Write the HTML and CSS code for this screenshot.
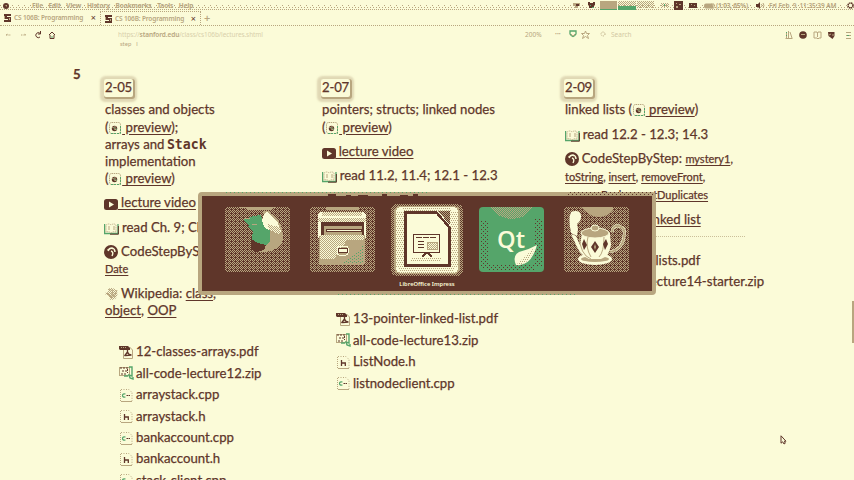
FILE: index.html
```html
<!DOCTYPE html>
<html lang="en">
<head>
<meta charset="utf-8">
<title>CS 106B: Programming Abstractions</title>
<link rel="stylesheet" href="styles.css">
</head>
<body>
<svg class="defs" width="0" height="0" aria-hidden="true">
  <defs>
    <pattern id="half" width="2" height="2" patternUnits="userSpaceOnUse"><rect width="1" height="1" fill="#b8a67f"/><rect x="1" y="1" width="1" height="1" fill="#b8a67f"/></pattern>
    <pattern id="weave" width="4" height="4" patternUnits="userSpaceOnUse"><path fill="#b8a67f" d="M0 0h1v1H0zM2 0h1v1H2zM1 1h1v1H1zM3 1h1v1H3zM0 2h1v1H0zM1 3h1v1H1zM3 3h1v1H3z"/></pattern>
    <pattern id="speck" width="4" height="4" patternUnits="userSpaceOnUse"><path fill="#5f362a" d="M0 0h1v1H0zM2 2h1v1H2z"/></pattern>
    <pattern id="tanspeck" width="4" height="4" patternUnits="userSpaceOnUse"><path fill="#b8a67f" d="M0 0h1v1H0zM2 0h1v1H2zM1 2h1v1H1zM3 2h1v1H3z"/></pattern>
    <pattern id="creamspeck" width="2" height="2" patternUnits="userSpaceOnUse"><path fill="#fbfbd8" d="M0 0h1v1H0zM1 1h1v1H1z"/></pattern>
    <pattern id="greenspeck" width="4" height="3" patternUnits="userSpaceOnUse"><path fill="#55a56a" d="M0 0h1v1H0zM2 1h1v1H2z"/></pattern>
    <symbol id="s-icon" viewBox="0 0 7 8"><path fill="#5f362a" d="M0 0h7v2H3v1h4v5H0V6h4V5H0z"/><path fill="#b8a67f" d="M0 2h1v3H0zM5 4h1v2H5z"/></symbol>
    <symbol id="preview" viewBox="0 0 14 14"><rect x="1.500" y="1.500" width="11" height="11" rx="2" fill="none" stroke="#b8a67f" stroke-dasharray="1.500 .7"/><path d="M3 12.500h9.500V4" fill="none" stroke="#55a56a" stroke-dasharray="2 1"/><circle cx="6.500" cy="7.500" r="2.700" fill="#5f362a"/><path d="M4 6l2 1M7 5v3M6 8l3 1" stroke="#b8a67f"/><path d="M6 7h1M8 8h1" stroke="#55a56a"/></symbol>
    <symbol id="video" viewBox="0 0 14 11"><rect width="14" height="11" rx="2.500" fill="#5f362a"/><path d="M5 2.500v6l5-3z" fill="#fbfbd8"/></symbol>
    <symbol id="book" viewBox="0 0 15 12"><path d="M.6 1v9.500h13.400V1" fill="none" stroke="#55a56a" stroke-width="1.300"/><path d="M2 9V2q3-2 5 0 3-2 5 0v7q-3-1-5 1-2-2-5-1z" fill="#fbfbd8" stroke="#b8a67f" stroke-width=".8" stroke-dasharray="1.500 .7"/><path d="M4 4h2M4 6h2M9 4h2M9 6h2" stroke="#b8a67f"/><path d="M6 11.200h8.400V3" fill="none" stroke="#5f362a"/></symbol>
    <symbol id="step" viewBox="0 0 14 14"><circle cx="7" cy="7" r="7" fill="#5f362a"/><path d="M4 6q1-3 4-3 3 1 3 4M7 6q3 1 1 5" fill="none" stroke="#fbfbd8" stroke-width="1.400"/><path d="M3 4h1v1H3zM9 4h1v1H9z" fill="#b8a67f"/></symbol>
    <symbol id="wiki" viewBox="0 0 14 14"><circle cx="7.500" cy="7" r="6" fill="url(#half)"/><path d="M3 6l5 5V5l2 5 3-7M5 2l4 2" fill="none" stroke="#b8a67f"/><path d="M0 3h5l-2 3zM0 8h4l2 4H2z" fill="#fbfbd8"/></symbol>
    <symbol id="pdf" viewBox="0 0 15 14"><path d="M4.500 4v9.500h9V5l-3-3" fill="none" stroke="#b8a67f"/><path d="M0 1h9l2 2v2H1L0 4z" fill="#5f362a"/><path d="M2 2.500h6" stroke="#b8a67f" stroke-dasharray="1 1"/><path d="M8.500 5v2l-3 4M8.500 7q1 3 4 3l-6 .5" stroke="#5f362a" fill="none" stroke-width="1.300"/></symbol>
    <symbol id="zip" viewBox="0 0 15 14"><rect x=".5" y="1.500" width="10" height="8" fill="none" stroke="#b8a67f"/><path d="M1 2h9M2 8h5M3 5h5M8.500 3v4" stroke="#5f362a" stroke-dasharray="2 1"/><path d="M10 1h3v9l-3-1 1 3 3 1v-2M5 10h4" fill="none" stroke="#55a56a" stroke-width="1.400"/></symbol>
    <symbol id="sheet" viewBox="0 0 13 14"><path d="M1 1.500h8l3 3V13" fill="none" stroke="#b8a67f" stroke-dasharray="1 1.500"/><path d="M.5 2v11" stroke="#b8a67f" stroke-dasharray="1 1"/><path d="M1 13.500h11" stroke="#b8a67f"/></symbol>
    <symbol id="cpp" viewBox="0 0 13 14"><use href="#sheet"/><path d="M5.500 6q-3-.5-3 1.500t3 1.500" fill="none" stroke="#55a56a" stroke-width="1.200"/><path d="M6.500 7.500H10" stroke="#5f362a" stroke-dasharray="1.500 .5"/></symbol>
    <symbol id="h" viewBox="0 0 13 14"><use href="#sheet"/><path d="M4.500 5v6M5 8h3.300v3" fill="none" stroke="#5f362a" stroke-width="1.300"/></symbol>
  </defs>
</svg>

<header class="menubar">
  <svg class="orb" width="6" height="6"><circle cx="3" cy="3" r="3" fill="#5f362a"/><path d="M2 2h2v2" fill="#b8a67f"/></svg>
  <nav class="menus"><span>File</span><span>Edit</span><span>View</span><span>History</span><span>Bookmarks</span><span>Tools</span><span>Help</span></nav>
  <div class="status">
    <svg width="125" height="11" shape-rendering="crispEdges">
      <path fill="#b8a67f" d="M1 3h7v3H6v2H3V6H1z"/><path fill="#5f362a" d="M4 4h3v2H4zM16 2h2v1h3V2h2v3h-1v3h-5V5h-1z"/><path fill="#55a56a" d="M18 5h1v1h-1zM20 7h2v1h-2z"/>
      <path fill="#b8a67f" d="M28 1h17v8H28z"/><path fill="url(#half)" d="M46 1h18v6H46zM65 1h17v7H65z"/><path fill="#55a56a" d="M46 6h18v4H46zM28 9h17v1H28z"/>
      <path fill="url(#half)" d="M89 3h8v4h-8z"/><path fill="#55a56a" d="M92 4h1v2h-1z"/>
      <path fill="#5f362a" d="M102 1h9v9h-9zM117 3h8v5h-8z"/><path fill="#b8a67f" d="M104 3h1v1h-1zM107 4h2v1h-2zM104 6h2v2h-2zM119 4h1v1h-1zM122 5h1v1h-1z"/>
    </svg>
    <svg class="battery" width="12" height="8"><rect x="1" y="1.500" width="9" height="5" rx="2" fill="#b8a67f"/><path d="M8 2h3v4H8" fill="none" stroke="#b8a67f"/></svg>
    <span class="charge">(1:03, 65%)</span>
    <svg class="speaker" width="9" height="7"><path fill="#5f362a" d="M0 2h2l2-2v7L2 5H0z"/><path d="M5 2l1 1.500L5 5M7 1l1 2.500L7 6" fill="none" stroke="#b8a67f"/></svg>
    <span class="clock">Fri Feb&nbsp; 9 &nbsp;11:35:39 AM</span>
    <svg class="power" width="7" height="7"><circle cx="3.500" cy="3.500" r="2.500" fill="none" stroke="#5f362a" stroke-width="1.500" stroke-dasharray="1.500 .5"/></svg>
  </div>
</header>

<div class="tabs">
  <div class="tab"><svg width="7" height="8"><use href="#s-icon"/></svg><span>CS 106B: Programming</span><b>×</b></div>
  <div class="tab active"><svg width="7" height="8"><use href="#s-icon"/></svg><span>CS 106B: Programming</span><b>×</b></div>
  <div class="plus">+</div>
</div>

<div class="toolbar">
  <svg class="navicons" width="56" height="10" fill="none"><path d="M0 5h5M0 5l2-1M15 5h5M20 5l-2-1" stroke="#b8a67f" stroke-dasharray="1 .6"/><path d="M34 3.300A2.500 2.500 0 1 0 34 7M34.500 1v3H32" stroke="#5f362a"/><path d="M43 5l3-3 3 3M44 5v3.500h4V5" stroke="#5f362a"/><path d="M46 6v2" stroke="#55a56a"/></svg>
  <div class="address"><i>https://</i>stanford.edu<i>/class/cs106b/lectures.shtml</i></div>
  <span class="zoomlevel">200%</span><span class="dots">•••</span>
  <svg class="urlicons" width="60" height="9" fill="none"><path d="M1 1h6v3q-3 5-6 0z" stroke="#55a56a" stroke-width="1.300"/><path d="M2 4l2 2 2-2" stroke="#b8a67f"/><path d="M16.500 1l1 2.500h3l-2 2 1 3-3-2-3 2 1-3-2-2h3z" stroke="#b8a67f"/><circle cx="34" cy="4" r="2" stroke="#b8a67f" stroke-dasharray="1 1"/></svg>
  <span class="search">Search</span>
  <svg class="tools" width="69" height="10" fill="none"><path d="M1.500 2v6M3.500 1v7M5 2l2 6M.5 8.500h7" stroke="#b8a67f"/><path d="M1.500 2v6" stroke="#55a56a" stroke-dasharray="1 2"/><circle cx="18" cy="5" r="3.800" fill="#5f362a"/><path d="M16 4.500h4" stroke="#b8a67f"/><path d="M29 2h3l.5 1L33 2h3v6h-2l-1 1-1-1h-3zM32.500 3v4" stroke="#b8a67f"/><path d="M43 2h6.500v4l-2 3-4-3z" fill="#5f362a"/><path d="M44 5l2-1M47 5h2" stroke="#b8a67f"/><path d="M61 2.500h5M61 5.500h5M61 8.500h5" stroke="#b8a67f"/><path d="M62 5.500h2" stroke="#55a56a"/></svg>
</div>

<main class="schedule">
  <div class="cut"><span>step</span><span>l</span></div>
  <div class="week">5</div>
  <section class="day one">
    <h2>2-05</h2>
    <div class="topic">
      <p>classes and objects</p>
      <p>(<svg width="14" height="14"><use href="#preview"/></svg><a>&nbsp;preview</a>);</p>
      <p>arrays and <code>Stack</code></p>
      <p>implementation</p>
      <p>(<svg width="14" height="14"><use href="#preview"/></svg><a>&nbsp;preview</a>)</p>
    </div>
    <div class="item"><svg width="14" height="11"><use href="#video"/></svg><a>&nbsp;lecture video</a></div>
    <div class="item"><svg width="15" height="12"><use href="#book"/></svg>&nbsp;read Ch. 9; Ch. 10</div>
    <div class="item"><svg width="14" height="14"><use href="#step"/></svg>&nbsp;CodeStepByStep:<p class="small"><a>Date</a></p></div>
    <div class="item"><svg width="14" height="14"><use href="#wiki"/></svg>&nbsp;Wikipedia: <a>class</a>,<p><a>object</a>, <a>OOP</a></p></div>
    <ul class="files">
      <li><svg width="15" height="14"><use href="#pdf"/></svg>12-classes-arrays.pdf</li>
      <li><svg width="15" height="14"><use href="#zip"/></svg>all-code-lecture12.zip</li>
      <li><svg width="15" height="14"><use href="#cpp"/></svg>arraystack.cpp</li>
      <li><svg width="15" height="14"><use href="#h"/></svg>arraystack.h</li>
      <li><svg width="15" height="14"><use href="#cpp"/></svg>bankaccount.cpp</li>
      <li><svg width="15" height="14"><use href="#h"/></svg>bankaccount.h</li>
      <li><svg width="15" height="14"><use href="#cpp"/></svg>stack-client.cpp</li>
    </ul>
  </section>
  <section class="day two">
    <h2>2-07</h2>
    <div class="topic">
      <p>pointers; structs; linked nodes</p>
      <p>(<svg width="14" height="14"><use href="#preview"/></svg><a>&nbsp;preview</a>)</p>
    </div>
    <div class="item"><svg width="14" height="11"><use href="#video"/></svg><a>&nbsp;lecture video</a></div>
    <div class="item"><svg width="15" height="12"><use href="#book"/></svg>&nbsp;read 11.2, 11.4; 12.1 - 12.3</div>
    <div class="item"><svg width="14" height="14"><use href="#step"/></svg>&nbsp;CodeStepByStep:</div>
    <ul class="files">
      <li><svg width="15" height="14"><use href="#pdf"/></svg>13-pointer-linked-list.pdf</li>
      <li><svg width="15" height="14"><use href="#zip"/></svg>all-code-lecture13.zip</li>
      <li><svg width="15" height="14"><use href="#h"/></svg>ListNode.h</li>
      <li><svg width="15" height="14"><use href="#cpp"/></svg>listnodeclient.cpp</li>
    </ul>
  </section>
  <section class="day three">
    <h2>2-09</h2>
    <div class="topic"><p>linked lists (<svg width="14" height="14"><use href="#preview"/></svg><a>&nbsp;preview</a>)</p></div>
    <div class="item"><svg width="15" height="12"><use href="#book"/></svg>&nbsp;read 12.2 - 12.3; 14.3</div>
    <div class="item"><svg width="14" height="14"><use href="#step"/></svg>&nbsp;CodeStepByStep: <span class="small"><a>mystery1</a>,</span><p class="small"><a>toString</a>, <a>insert</a>, <a>removeFront</a>,</p><p class="small"><a>removeBack</a>, <a>countDuplicates</a></p></div>
    <div class="item"><svg width="14" height="14"><use href="#wiki"/></svg>&nbsp;Wikipedia: <a>linked list</a></div>
    <div class="rule"></div>
    <ul class="files">
      <li><svg width="15" height="14"><use href="#pdf"/></svg>14-linked-lists.pdf</li>
      <li><svg width="15" height="14"><use href="#zip"/></svg>all-code-lecture14-starter.zip</li>
    </ul>
  </section>
</main>

<div class="scrollbar"></div>

<div class="switcher">
  <svg class="fringe" width="458" height="103" shape-rendering="crispEdges"><path fill="url(#greenspeck)" d="M27 0h205v1H27zM140 102h240v1H140z"/><path fill="#5f362a" d="M130 2h8v2h-8zM148 3h5v1h-5zM160 3h10v1h-10zM184 2h5v2h-5zM202 3h8v1h-8zM215 2h5v2h-5z"/><path fill="url(#speck)" d="M370 0h86v3h-86z"/></svg>
  <div class="apps">
    <svg width="65" height="65" shape-rendering="crispEdges">
      <rect width="65" height="65" rx="4" fill="url(#weave)"/>
      <path fill="#b8a67f" d="M15 0h35v1h-3v2H22V1h-7zM38 4h5q13 8 15 23 1 16-18 18h-6l9-9z"/>
      <path fill="#55a56a" d="M18 13l10-4 8-1 2 7 7 8v12l-5 4-6-1-8-4 2-9-6-6h3z"/>
      <path fill="#b8a67f" d="M20 11h5v1h-5zM27 17h5v1h-5z"/><path fill="#5f362a" d="M26 32l7 4 8 2-2 5-8 2-5-3z"/>
      <path fill="#fbfbd8" d="M42 5l10 9 4 10-2 3-14-6-3-7 2-7z"/><path fill="url(#half)" d="M42 17l13 3v6h-9z"/>
    </svg>
    <svg width="65" height="65" shape-rendering="crispEdges">
      <rect width="65" height="65" rx="4" fill="url(#weave)"/>
      <path fill="#b8a67f" d="M16 0h33v3H16z"/><rect x="8" y="5" width="48" height="28" rx="4" fill="#fbfbd8"/><path fill="url(#half)" d="M12 5h40v4H12zM8 11h48v4H8z"/>
      <path fill="#5f362a" d="M11 15h43v15H11z"/><path fill="#b8a67f" d="M14 19h38v9H14z"/><path fill="#5f362a" d="M16 22h36v3H16z"/><path fill="#fbfbd8" d="M17 23h34v1H17z"/>
      <rect x="9" y="28" width="46" height="30" rx="2" fill="#b8a67f"/><path fill="url(#creamspeck)" d="M10 28h44v5H37L24 52H10z"/><path fill="url(#greenspeck)" d="M54 34v23H30q18-8 24-23"/>
      <rect x="27" y="39" width="11" height="9" rx="2" fill="none" stroke="#fbfbd8"/><path fill="#fbfbd8" stroke="#5f362a" d="M28 41h9v4h-9z"/>
    </svg>
    <div class="selected">
      <svg width="72" height="72" shape-rendering="crispEdges">
        <rect width="72" height="72" rx="6" fill="url(#half)"/><rect x="3" y="2" width="66" height="68" rx="6" fill="#b8a67f"/><rect x="5" y="3" width="62" height="66" rx="5" fill="#fbfbd8"/><path fill="url(#tanspeck)" d="M5 7h8v57H5zM59 7h8v57h-8zM12 3h48v5H12zM8 64h55v5H8z"/>
        <path d="M14 9h31l14 15v38H14z" fill="#fbfbd8"/><path d="M14.500 8.500h31l13 15v38h-44z" fill="none" stroke="#5f362a" stroke-width="2.500"/><path d="M47 7h12v14z" fill="#5f362a"/><path d="M47 7h12v14z" fill="url(#half)"/>
        <rect x="22.500" y="30.500" width="26" height="18" fill="#fbfbd8" stroke="#5f362a"/><path d="M25 33.500h20M27 37.500h7M27 40.500h7M27 43.500h7" stroke="#5f362a" stroke-dasharray="6 1"/><path d="M36 38h10v7H36z" fill="url(#half)" stroke="#b8a67f"/><path d="M35 49l-4 4M37 49l4 4" stroke="#5f362a" stroke-width="1.500"/><path d="M20 54h30v4H20z" fill="url(#tanspeck)"/>
      </svg>
      <span>LibreOffice Impress</span>
    </div>
    <svg width="65" height="65">
      <rect width="65" height="65" rx="4" fill="#55a56a"/><path fill="url(#speck)" d="M2 14h8v48H2zM56 11h7v48h-7zM10 58h46v6H10z" shape-rendering="crispEdges"/><path fill="url(#half)" d="M12 0h42q-8 12-21 12T12 0" shape-rendering="crispEdges"/>
      <text class="qt" x="18" y="41" textLength="28" lengthAdjust="spacingAndGlyphs">Qt</text><path d="M58 38q-6 22-21 20-4-9 3-13 9-2 18-7z" fill="#fbfbd8"/><path fill="url(#tanspeck)" d="M56 40q-6 19-19 18z"/>
    </svg>
    <svg width="65" height="65">
      <rect width="65" height="65" rx="4" fill="url(#weave)" shape-rendering="crispEdges"/><path d="M17 0h32v3q-5 7-14 7T17 0" fill="#b8a67f"/><path d="M7 5q8-3 10 3 1 5-4 9l1 5-1 7-6-3q-3-15 0-21" fill="#fbfbd8"/>
      <ellipse cx="31" cy="52" rx="17" ry="6" fill="#fbfbd8"/><ellipse cx="31" cy="52" rx="14" ry="3" fill="#b8a67f"/>
      <path d="M48 25q1-7 7-6 7 2 5 10-1 13-14 16" fill="none" stroke="#fbfbd8" stroke-width="3"/><path d="M48 25q1-7 7-6 7 2 5 10-1 13-14 16" fill="none" stroke="#b8a67f" stroke-width="2"/>
      <path d="M7 27l5 2 4 9 2-12q14-7 28 0l1 12q-2 12-10 14H25q-9-4-12-12z" fill="#fbfbd8"/><ellipse cx="31" cy="26" rx="14" ry="5" fill="#b8a67f" stroke="#fbfbd8"/><ellipse cx="31" cy="21" rx="4" ry="3" fill="#b8a67f" stroke="#fbfbd8"/><path d="M15 28q1 20 12 24M24 30q-3 10 3 20M40 30q0 15-5 20" fill="none" stroke="#b8a67f"/><path d="M31 34l4 6-4 6-4-6zM20 32l3 6-3 5-2-6zM42 32l2 5-3 6-2-6z" fill="#5f362a"/><path d="M31 37l1 3-1 3-1-3z" fill="#b8a67f"/>
    </svg>
  </div>
</div>

<svg class="cursor" width="7" height="10"><path d="M1 .8v7.400l1.700-1.400L4 9l1.300-.8-1-2H6z" fill="#fbfbd8" stroke="#5f362a"/></svg>
</body>
</html>
```
FILE: styles.css
```css
:root { --cream: #fbfbd8; --brown: #5f362a; --tan: #b8a67f; --green: #55a56a; }
* { box-sizing: border-box; }
body { position: relative; width: 854px; height: 480px; margin: 0; overflow: hidden; background: var(--cream); color: var(--brown); font-family: Lato, "Noto Sans", sans-serif; }
p, h2, ul { margin: 0; padding: 0; font: inherit; }
.defs { position: absolute; }

.menubar { --dots: linear-gradient(90deg, var(--tan) 1px, transparent 1px); display: flex; align-items: center; height: 11px; padding-left: 3px; color: var(--tan); font: 6.5px/11px "Noto Sans", sans-serif; white-space: nowrap;
  background: var(--dots) 0 5px / 6px 1px repeat-x, var(--dots) 1px 7px / 3px 1px repeat-x, var(--dots) 0 9px / 2px 1px repeat-x; }
.menus { display: flex; gap: 5.6px; margin-left: 23px; font-weight: 700; letter-spacing: -.1px; }
.status { display: flex; align-items: center; width: 282px; margin-left: auto; }
.status svg { flex: none; }
.battery { margin-left: 6px; }
.charge { width: 39px; padding-left: 1px; font-weight: 700; letter-spacing: -.2px; }
.speaker { margin-left: 2px; }
.clock { width: 76px; margin-left: 4px; font-weight: 600; letter-spacing: -.1px; }
.power { margin-left: 2px; }

.tabs { display: flex; height: 15px; border-bottom: 1px dotted var(--tan); color: var(--tan); font: 600 6.5px/14px "Noto Sans", sans-serif; }
.tab { display: flex; align-items: center; width: 100px; padding: 0 4px; white-space: nowrap; }
.tab span { flex: 1; margin: 0 2px 0 3px; letter-spacing: -.15px; }
.tab b { color: var(--brown); font-size: 9px; font-weight: 400; }
.tab.active { width: 101px; border: 1px dotted var(--tan); border-width: 1px 1px 0; }
.plus { margin-left: 3px; font-size: 11px; }

.toolbar { display: flex; align-items: center; height: 17px; padding-left: 6px; color: var(--tan); font: 6.5px/15px "Noto Sans", sans-serif; white-space: nowrap; }
.toolbar svg { flex: none; }
.address { width: 406px; margin-left: 56px; font-weight: 600; font-size: 6.5px; letter-spacing: -.1px; }
.address i { font-style: normal; font-weight: 400; opacity: .5; }
.zoomlevel { width: 30px; margin-left: 1px; }
.dots { width: 14px; font-size: 5px; }
.search { width: 30px; margin-left: -18px; opacity: .6; }
.tools { margin-left: auto; }

.schedule { position: relative; display: grid; grid-template-columns: 105px 217px 243px 1fr; height: 437px; font-size: 13.2px; line-height: 17.2px; -webkit-text-stroke: .25px var(--brown); white-space: nowrap; }
.cut { position: absolute; left: 120px; top: -3px; display: flex; gap: 5px; color: var(--tan); font-size: 6px; line-height: 7px; -webkit-text-stroke: 0; }
.week { padding: 23px 0 0 73px; font-weight: 700; }
.day { padding-top: 36px; }
h2 { width: 29px; height: 18px; margin: 0 0 4.400px -1px; padding-left: 1px; border-radius: 2px; background: var(--cream); box-shadow: 1px 1px 0 1px var(--tan), 0 1px 2px 4px #b8a67f66; letter-spacing: -.2px; }
.topic p { height: 17.2px; }
.topic svg, .item svg { vertical-align: -3px; }
.topic svg { margin: 0 -.2px; }
.item svg { margin-right: -.7px; }
.one .item svg { margin-left: -.6px; }
.item { margin-top: 7px; }
.small { font-size: 11px; line-height: 18px; }
a { text-decoration: underline; text-decoration-thickness: 1px; text-underline-offset: 2px; }
code { margin-left: -1px; font: 700 13.2px/1 "DejaVu Sans Mono", monospace; -webkit-text-stroke: 0; }
.files { padding-left: 14px; list-style: none; }
.files li { display: flex; align-items: center; gap: 2px; height: 21.400px; }
.one .files { margin-top: 22px; }
.two .files { margin-top: 100px; }
.three .files { margin-top: 13px; }
.rule { width: 180px; margin-top: 8px; border-top: 1px dotted var(--tan); opacity: .7; }

.scrollbar { position: absolute; right: 0; top: 301px; width: 2px; height: 42px; background: var(--tan); }
.switcher { position: absolute; left: 198px; top: 192px; width: 458px; height: 103px; border: 4px solid var(--tan); border-radius: 4px; background: var(--brown); }
.fringe { position: absolute; left: -4px; top: -4px; }
.apps { display: flex; justify-content: space-between; padding: 11px 23px 0; }
.apps > svg { flex: none; }
.selected { display: flex; flex-direction: column; align-items: center; width: 72px; height: 72px; margin: -3px -4px; color: var(--cream); font: 600 5.8px/12px "Noto Sans", sans-serif; white-space: nowrap; }
.selected svg { flex: none; }
.selected span { margin-top: 2px; }
.qt { fill: var(--cream); font: 600 24px "Open Sans", sans-serif; }
.cursor { position: absolute; left: 780px; top: 435px; }
```
